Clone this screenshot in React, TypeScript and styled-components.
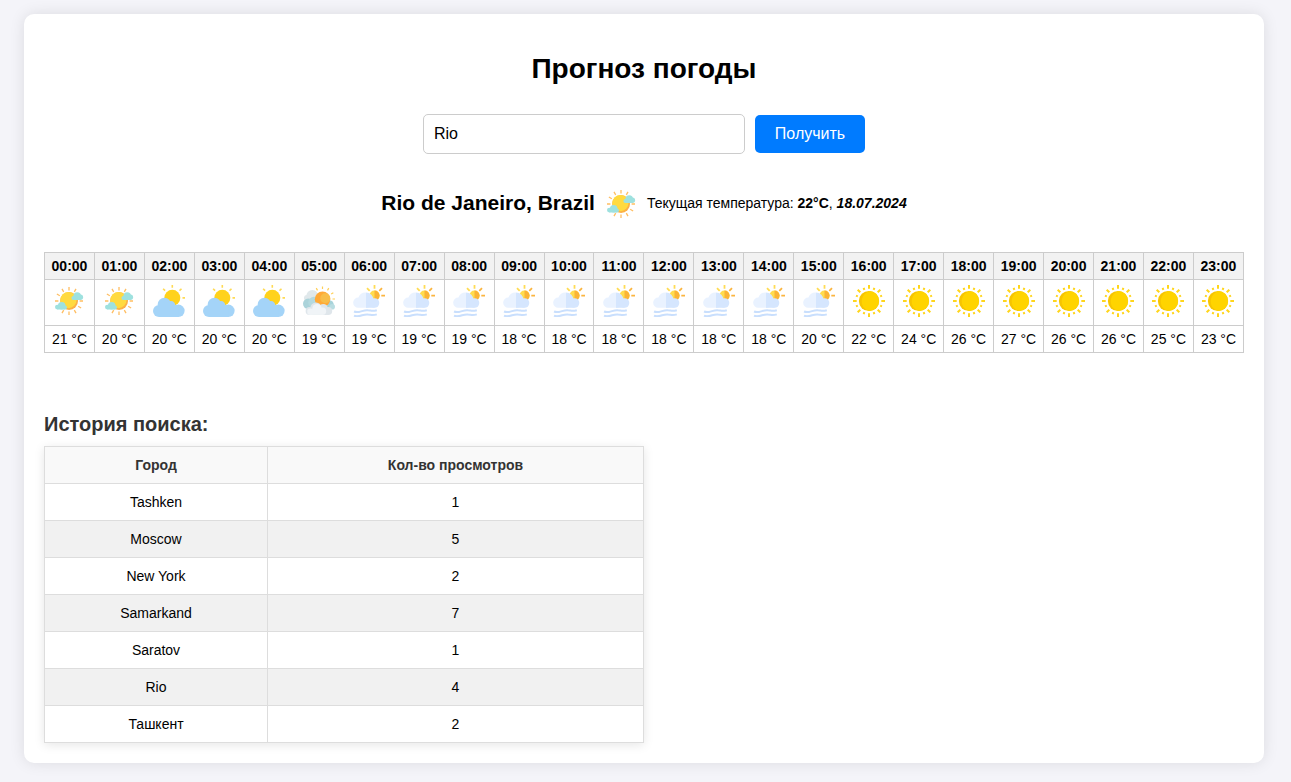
import React from "react";
import styled, { createGlobalStyle, css } from "styled-components";

const GlobalStyle = createGlobalStyle`
  * { box-sizing: border-box; }
  body {
    margin: 0;
    background: #f4f4f9;
    color: #000;
    font-family: "Liberation Sans", Arial, sans-serif;
    font-size: 14px;
  }
`;

const Page = styled.div`
  display: flex;
  min-height: 782px;
  padding: 14px 27px 19px 24px;
`;

const Card = styled.main`
  flex: 1;
  height: 749px;
  padding: 20px;
  background: #fff;
  border-radius: 10px;
  box-shadow: 0 0 15px rgba(0, 0, 0, 0.1);
`;

const Title = styled.h1`
  margin: 19px 0 0;
  font-size: 28px;
  line-height: 32px;
  text-align: center;
`;

const SearchForm = styled.form`
  display: flex;
  justify-content: center;
  align-items: center;
  gap: 10px;
  margin-top: 29px;
`;

const CityInput = styled.input`
  width: 322px;
  height: 40px;
  padding: 0 10px;
  border: 1px solid #ccc;
  border-radius: 5px;
  font: inherit;
  font-size: 16px;
  outline: none;
`;

const SubmitButton = styled.button`
  width: 110px;
  height: 38px;
  padding: 0;
  border: 0;
  border-radius: 5px;
  background: #007bff;
  color: #fff;
  font: inherit;
  font-size: 16px;
`;

const Current = styled.section`
  display: flex;
  justify-content: center;
  align-items: center;
  height: 32px;
  margin-top: 34px;
`;

const Place = styled.h2`
  margin: 0 10px 2px 0;
  font-size: 21px;
  line-height: 24px;
  white-space: nowrap;
`;

const CurrentText = styled.p`
  margin: 0 0 2px 10px;
  line-height: 16px;
  white-space: nowrap;
`;

const HourTable = styled.table`
  width: 1200px;
  margin-top: 32px;
  border-collapse: collapse;
  table-layout: fixed;
  text-align: center;
`;

const HourCell = styled.td<{ $kind: "time" | "icon" | "temp" }>`
  height: ${(p) => (p.$kind === "icon" ? 46 : 27)}px;
  padding: ${(p) => (p.$kind === "icon" ? "0 0 4px" : "0")};
  border: 1px solid #ccc;
  line-height: 16px;
  white-space: nowrap;
  ${(p) =>
    p.$kind === "time" &&
    css`
      background: #f2f2f2;
      font-weight: bold;
    `}
`;

const WeatherSvg = styled.svg`
  display: block;
  flex: none;
  width: 32px;
  height: 32px;
  margin: 0 auto;
`;

const CurrentIcon = styled.div`
  flex: none;
  width: 32px;
  margin-bottom: 1px;
`;

const HistoryTitle = styled.h3`
  margin: 59px 0 10px;
  color: #333;
  font-size: 20px;
  line-height: 24px;
`;

const HistoryTable = styled.table`
  width: 600px;
  border-collapse: collapse;
  table-layout: fixed;
  text-align: center;
  box-shadow: 0 2px 10px rgba(0, 0, 0, 0.1);
`;

const HistoryRow = styled.tr<{ $shaded?: boolean }>`
  background: ${(p) => (p.$shaded ? "#f1f1f1" : "#fff")};
`;

const HistoryCell = styled.td`
  height: 37px;
  padding: 0;
  border: 1px solid #ddd;
  line-height: 16px;
`;

const HistoryHead = styled(HistoryCell).attrs({ as: "th" })`
  background: #f9f9f9;
  color: #333;
`;

const CityCol = styled.col`
  width: 223px;
`;

type Weather = "partly" | "cloudy" | "overcast" | "mist" | "sunny";

const ray = (angle: number, from: number, to: number, cx: number, cy: number) => {
  const a = (angle * Math.PI) / 180;
  return `M${cx + Math.cos(a) * from} ${cy + Math.sin(a) * from}L${cx + Math.cos(a) * to} ${cy + Math.sin(a) * to}`;
};

const rays = (angles: number[], from: number, to: number, cx: number, cy: number) =>
  angles.map((a) => ray(a, from, to, cx, cy)).join("");

const Partly = () => (
  <>
    <path d={rays([0, 30, 60, 90, 120, 180, 210, 240, 270, 300], 10.6, 14, 16, 16)} stroke="#ffbe62" strokeWidth="1.3" />
    <circle cx="16.1" cy="16" r="8.9" fill="#fcb045" />
    <circle cx="15.4" cy="15.1" r="8.1" fill="#ffda3f" />
    <g fill="#9ee1df">
      <circle cx="24.2" cy="11" r="3.8" />
      <circle cx="27.4" cy="12.2" r="2.7" />
      <circle cx="20.4" cy="13" r="2" />
      <rect x="20.4" y="11.5" width="7" height="3.5" />
      <circle cx="8.7" cy="20.7" r="3.8" />
      <circle cx="4.4" cy="22.1" r="2.4" />
      <circle cx="12" cy="22.5" r="2" />
      <rect x="4.4" y="21" width="7.6" height="3.5" />
    </g>
  </>
);

const Cloudy = () => (
  <>
    <path d={rays([0, 270, 225, 315], 10.2, 13, 19.3, 12.9)} stroke="#ffda54" strokeWidth="1.6" />
    <circle cx="19.3" cy="12.8" r="8" fill="#ffd21c" />
    <g fill="#a4d4f8">
      <circle cx="6" cy="26" r="6" />
      <circle cx="11.4" cy="19.4" r="6.7" />
      <circle cx="18" cy="20.5" r="4.4" />
      <circle cx="25.4" cy="25.8" r="6.2" />
      <rect x="6" y="20" width="19.4" height="12" />
    </g>
  </>
);

const Overcast = () => (
  <>
    <path d={rays([240, 270, 300, 330, 0], 10, 12.5, 19.5, 14)} stroke="#ffcf55" strokeWidth="1.2" />
    <circle cx="9.3" cy="11" r="6" fill="#e0e8eb" />
    <circle cx="4" cy="13" r="3" fill="#e0e8eb" />
    <circle cx="5.2" cy="18.8" r="5.2" fill="#abd3da" />
    <circle cx="11" cy="17.5" r="5.8" fill="#b4d9df" />
    <circle cx="26" cy="20" r="4.8" fill="#a7d3da" />
    <circle cx="29.2" cy="21.8" r="2.8" fill="#b9dde2" />
    <circle cx="19.5" cy="14.3" r="7.7" fill="#ffa936" />
    <circle cx="22.3" cy="13.2" r="5" fill="#f8bd48" />
    <g fill="#dfe6eb">
      <circle cx="6.6" cy="26" r="4" />
      <circle cx="13" cy="23" r="5.6" />
      <circle cx="20.3" cy="23.5" r="4.5" />
      <circle cx="25.2" cy="26" r="4" />
      <rect x="6.600" y="24" width="18.600" height="6" />
    </g>
    <g fill="#f0f4f7">
      <circle cx="7.400" cy="26.700" r="3.200" />
      <circle cx="14" cy="23.600" r="4.700" />
      <circle cx="19.500" cy="26.300" r="3.700" />
      <rect x="7.400" y="24.500" width="12" height="5.400" />
    </g>
  </>
);

const Mist = () => (
  <>
    <path d={rays([180, 225, 270], 6.8, 10.6, 21.5, 10.6)} stroke="#ffdc55" strokeWidth="1.8" />
    <path d={rays([0, 315], 6.8, 10.6, 21.5, 10.6)} stroke="#fbb540" strokeWidth="1.8" />
    <circle cx="21.5" cy="10.6" r="5.1" fill="#ffdc4d" />
    <path d="M21.5 5.5a5.1 5.1 0 0 1 0 10.2Z" fill="#fbb435" />
    <path d="M13 22.8H5.3a5.2 5.2 0 0 1 .1-10.400A7.700 7.700 0 0 1 13 7.500Z" fill="#e9f2ff" />
    <g fill="#d5e6fe">
      <path d="M13 7.500a7.600 7.600 0 0 1 0 15.200Z" />
      <circle cx="21.500" cy="18" r="4.800" />
      <rect x="13" y="16.500" width="8.500" height="6.300" />
    </g>
    <g fill="none" strokeWidth="2">
      <path d="M1 26.500q2 .9 5 .4c3-.5 5-1.900 8.500-1.700s4.500 1.500 9.300 0" stroke="#c9dffd" />
      <path d="M1 30.700q2 .9 5 .4c3-.5 5-1.900 8.500-1.700s4.500 1.500 9.300 0" stroke="#c9dffd" />
    </g>
  </>
);

const Sunny = () => (
  <>
    <path d={rays([0, 45, 90, 135, 180, 225, 270, 315], 12.3, 16, 16, 16)} stroke="#ffd51a" strokeWidth="2" />
    <path d={rays([22.5, 67.5, 112.5, 157.5, 202.5, 247.5, 292.5, 337.5], 12.1, 14.1, 16, 16)} stroke="#ffd51a" strokeWidth="2" />
    <circle cx="16" cy="16" r="10.1" fill="#f7c500" />
    <path d="M17 5.95a10.1 10.1 0 0 1 0 20.1C6 24 6 9 17 5.95Z" fill="#ffd400" />
  </>
);

const drawings: Record<Weather, React.FC> = {
  partly: Partly,
  cloudy: Cloudy,
  overcast: Overcast,
  mist: Mist,
  sunny: Sunny,
};

const WeatherIcon = ({ kind }: { kind: Weather }) => {
  const Drawing = drawings[kind];
  return (
    <WeatherSvg viewBox="0 0 32 32" aria-hidden="true">
      <Drawing />
    </WeatherSvg>
  );
};

const temps = [21, 20, 20, 20, 20, 19, 19, 19, 19, 18, 18, 18, 18, 18, 18, 20, 22, 24, 26, 27, 26, 26, 25, 23];

const weatherAt = (hour: number): Weather => {
  if (hour < 2) return "partly";
  if (hour < 5) return "cloudy";
  if (hour < 6) return "overcast";
  return hour < 16 ? "mist" : "sunny";
};

const searches: [string, number][] = [
  ["Tashken", 1],
  ["Moscow", 5],
  ["New York", 2],
  ["Samarkand", 7],
  ["Saratov", 1],
  ["Rio", 4],
  ["Ташкент", 2],
];

export default function App() {
  return (
    <>
      <GlobalStyle />
      <Page>
        <Card>
          <Title>Прогноз погоды</Title>
          <SearchForm onSubmit={(e) => e.preventDefault()}>
            <CityInput defaultValue="Rio" />
            <SubmitButton>Получить</SubmitButton>
          </SearchForm>
          <Current>
            <Place>Rio de Janeiro, Brazil</Place>
            <CurrentIcon>
              <WeatherIcon kind="partly" />
            </CurrentIcon>
            <CurrentText>
              Текущая температура: <b>22°C</b>,{" "}
              <b>
                <i>18.07.2024</i>
              </b>
            </CurrentText>
          </Current>
          <HourTable>
            <tbody>
              <tr>
                {temps.map((_, h) => (
                  <HourCell key={h} as="th" $kind="time">
                    {`${String(h).padStart(2, "0")}:00`}
                  </HourCell>
                ))}
              </tr>
              <tr>
                {temps.map((_, h) => (
                  <HourCell key={h} $kind="icon">
                    <WeatherIcon kind={weatherAt(h)} />
                  </HourCell>
                ))}
              </tr>
              <tr>
                {temps.map((t, h) => (
                  <HourCell key={h} $kind="temp">{`${t} °C`}</HourCell>
                ))}
              </tr>
            </tbody>
          </HourTable>
          <HistoryTitle>История поиска:</HistoryTitle>
          <HistoryTable>
            <colgroup>
              <CityCol />
              <col />
            </colgroup>
            <tbody>
              <HistoryRow>
                <HistoryHead>Город</HistoryHead>
                <HistoryHead>Кол-во просмотров</HistoryHead>
              </HistoryRow>
              {searches.map(([city, views], i) => (
                <HistoryRow key={city} $shaded={i % 2 === 1}>
                  <HistoryCell>{city}</HistoryCell>
                  <HistoryCell>{views}</HistoryCell>
                </HistoryRow>
              ))}
            </tbody>
          </HistoryTable>
        </Card>
      </Page>
    </>
  );
}
